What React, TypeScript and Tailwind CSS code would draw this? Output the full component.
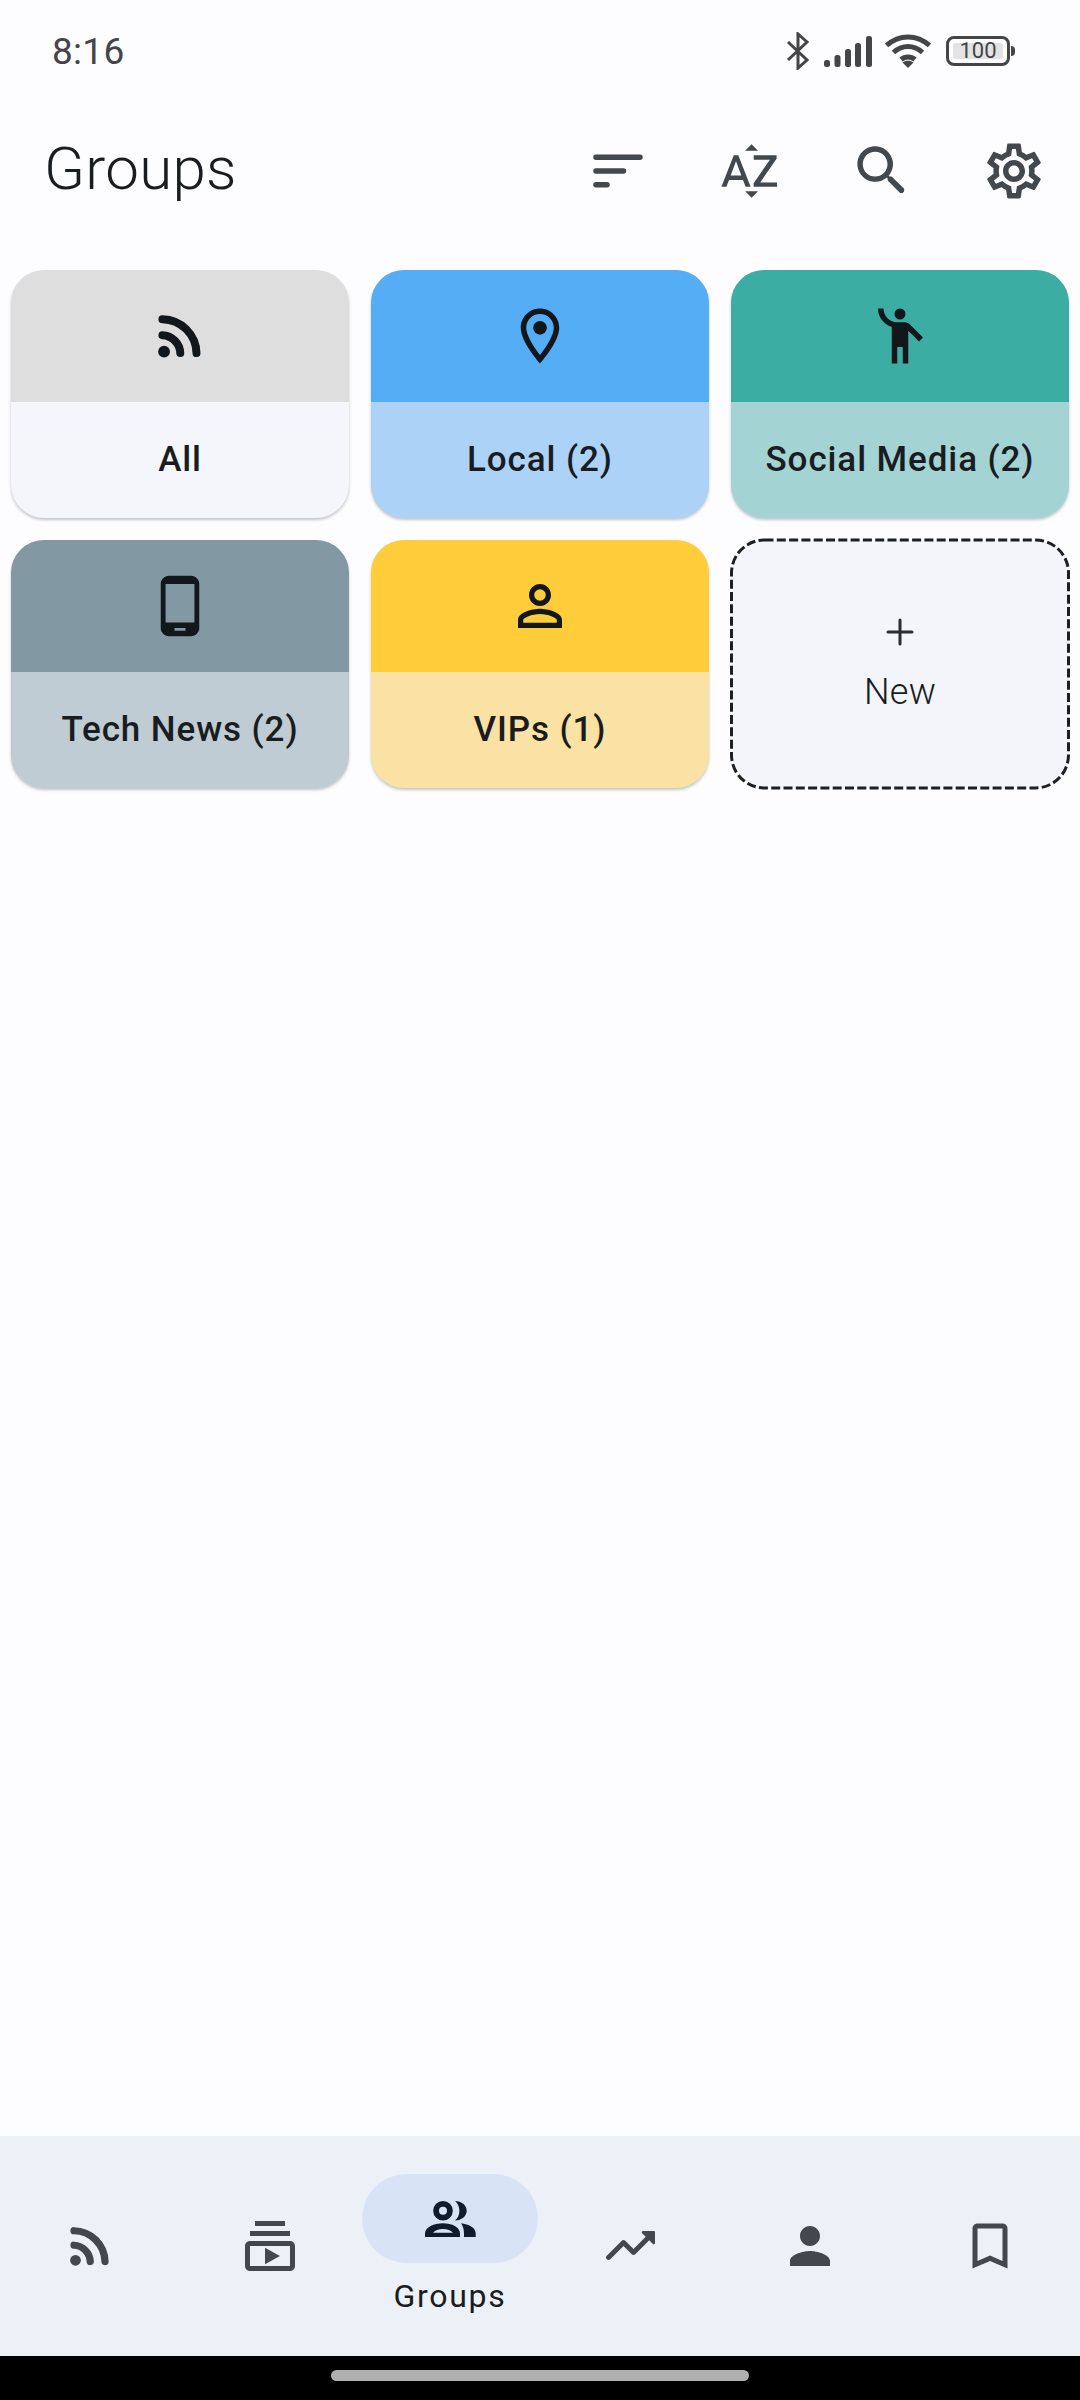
import type { ReactNode } from "react";
import {
  MdBookmarkBorder,
  MdEmojiPeople,
  MdOutlineLocationOn,
  MdOutlineSettings,
  MdOutlineSubscriptions,
  MdPerson,
  MdPersonOutline,
  MdPhoneAndroid,
  MdSortByAlpha,
} from "react-icons/md";

const ROBOTO = "font-['Roboto',sans-serif]";

function RssIcon({ size }: { size: number }) {
  return (
    <svg width={size} height={size} viewBox="0 0 24 24" fill="none" stroke="currentColor" strokeWidth="2.9" strokeLinecap="round">
      <circle cx="6.2" cy="17.7" r="2.15" fill="currentColor" stroke="none" />
      <path d="M5.6 5.9A12.6 12.6 0 0 1 18 18.2" />
      <path d="M5.6 11.7A6.8 6.8 0 0 1 12.1 18.2" />
    </svg>
  );
}

function SortIcon() {
  return (
    <svg width="66" height="66" viewBox="0 0 24 24" fill="none" stroke="currentColor" strokeWidth="2" strokeLinecap="round">
      <path d="M4 7h16M4 12h10M4 17h4" />
    </svg>
  );
}

function SearchIcon() {
  return (
    <svg width="66" height="66" viewBox="0 0 24 24" fill="currentColor">
      <path d="M15.5 14h-.79l-.28-.27c1.2-1.4 1.82-3.31 1.48-5.34-.47-2.78-2.79-5-5.59-5.34-4.2-.51-7.73 3.02-7.22 7.22.34 2.8 2.56 5.12 5.34 5.59 2.03.34 3.94-.28 5.34-1.48l.27.28v.79l4.25 4.25c.41.41 1.08.41 1.49 0 .41-.41.41-1.08 0-1.49L15.5 14zm-6 0C7.01 14 5 11.99 5 9.5S7.01 5 9.5 5 14 7.01 14 9.5 11.99 14 9.5 14z" />
    </svg>
  );
}

function TrendingIcon() {
  return (
    <svg width="60" height="60" viewBox="0 0 24 24" fill="currentColor">
      <path d="M16.85 6.85l1.44 1.44-4.88 4.88-3.29-3.29c-.39-.39-1.02-.39-1.41 0l-6 6.01c-.39.39-.39 1.02 0 1.41.39.39 1.02.39 1.41 0L9.41 12l3.29 3.29c.39.39 1.02.39 1.41 0l5.59-5.58 1.44 1.44c.31.31.85.09.85-.35V6.5c.01-.28-.21-.5-.49-.5h-4.29c-.45 0-.67.54-.36.85z" />
    </svg>
  );
}

function GroupsIcon() {
  return (
    <svg width="60" height="60" viewBox="0 0 60 60" fill="currentColor" fillRule="evenodd">
      {/* front head, back head crescent, front body, back body */}
      <path d="M23 12a9.800 9.800 0 1 1 0 19.600a9.800 9.800 0 0 1 0-19.600zm0 5.800a4 4 0 1 0 0 8a4 4 0 0 0 0-8z" />
      <path d="M35 12c6.500 0 11.700 4.400 11.700 9.800s-5.200 9.800-11.700 9.800c3-2.600 4.400-5.900 4.400-9.800s-1.400-7.200-4.400-9.800z" />
      <path d="M5 48v-3.500c0-6.500 9-10.300 18-10.300s17 3.800 17 10.300V48zM13 43.800h20c-1.800-2.400-5.800-3.800-10-3.800s-8.200 1.400-10 3.800z" />
      <path d="M41 34.300c7.500 1 14.700 4 14.700 10.200V48H44v-3.500c0-3.800-1-7.200-3-10.200z" />
    </svg>
  );
}

function StatusIcons() {
  return (
    <div className="flex items-center text-[#444548]">
      <svg width="24" height="38" viewBox="0 0 24 38" fill="none" stroke="currentColor" strokeWidth="3">
        <path d="M2 10l19 18-9 8V2l9 8L2 28" />
      </svg>
      <svg className="ml-[14px]" width="48" height="31" viewBox="0 0 48 31" fill="currentColor">
        <rect x="0" y="24" width="6" height="7" rx="2.500" />
        <rect x="10.500" y="19" width="6" height="12" rx="2.500" />
        <rect x="21" y="13" width="6" height="18" rx="2.500" />
        <rect x="31" y="7" width="6" height="24" rx="2.500" />
        <rect x="42" y="0" width="6" height="31" rx="2.500" />
      </svg>
      <svg className="ml-[13px]" width="46" height="34" viewBox="0 0 46 34" fill="none" stroke="currentColor" strokeWidth="5">
        <path d="M1.500 11.500C14 0 32 0 44.500 11.500" />
        <path d="M8.500 18.500C17 10.500 29 10.500 37.500 18.500" />
        <path d="M16 25.500C20 22 26 22 30 25.500" />
        <path d="M23 34l-5.500-5.500c3-2.500 8-2.500 11 0z" fill="currentColor" stroke="none" />
      </svg>
      <div className="relative ml-[15px] flex h-[30px] w-[64px] items-center justify-center rounded-[8px] border-[3px] border-[#444548]">
        <span className={`${ROBOTO} flex h-[16px] w-[50px] items-center justify-center rounded-[3px] bg-[#e3e3e4] text-[22px] leading-none`}>
          100
        </span>
      </div>
      <span className="ml-px h-[10px] w-[4px] rounded-r-full bg-[#444548]" />
    </div>
  );
}

function GroupCard({ icon, label, head, body }: { icon: ReactNode; label: string; head: string; body: string }) {
  return (
    <div className={`flex h-[248px] flex-col overflow-hidden rounded-[33px] shadow-[0_2px_3px_rgba(0,0,0,0.22)] ${body}`}>
      <div className={`flex h-[132px] items-center justify-center text-[#11171b] ${head}`}>{icon}</div>
      <div className={`${ROBOTO} flex flex-1 items-center justify-center text-[35px] font-medium tracking-[0.9px] text-[#191c20]`}>
        {label}
      </div>
    </div>
  );
}

function NewCard() {
  return (
    <div className="relative flex h-[248px] flex-col items-center rounded-[33px] bg-[#f3f5fa] pt-[77px]">
      <svg className="absolute inset-0 overflow-visible" width="338" height="248" fill="none" stroke="#1d1f23" strokeWidth="3">
        <rect x="0.500" y="0" width="337" height="248" rx="33" strokeDasharray="9 3.300" />
      </svg>
      <svg width="30" height="30" viewBox="0 0 30 30" stroke="#2a2d31" strokeWidth="3" strokeLinecap="round">
        <path d="M15 3v24M3 15h24" />
      </svg>
      <span className={`${ROBOTO} mt-[22px] text-[36px] font-light leading-[46px] tracking-[0.3px] text-[#191c20]`}>New</span>
    </div>
  );
}

function NavItem({ children }: { children: ReactNode }) {
  return <div className="flex flex-1 items-center justify-center text-[#43474e]">{children}</div>;
}

export default function App() {
  return (
    <div className="flex h-[2400px] w-[1080px] flex-col overflow-hidden bg-[#fdfdff]">
      {/* status bar */}
      <div className="flex h-[102px] items-center justify-between pl-[52px] pr-[65px]">
        <span className={`${ROBOTO} pt-[2px] text-[37px] tracking-[0.3px] text-[#444548]`}>8:16</span>
        <StatusIcons />
      </div>

      {/* app bar */}
      <div className="flex h-[138px] items-center justify-between pl-[44px]">
        <h1 className={`${ROBOTO} pb-[4px] text-[60px] font-light tracking-[0.3px] text-[#191c20]`}>Groups</h1>
        <div className="flex text-[#43474e]">
          <button className="flex w-[132px] justify-center"><SortIcon /></button>
          <button className="flex w-[132px] justify-center"><MdSortByAlpha size={66} /></button>
          <button className="flex w-[132px] justify-center"><SearchIcon /></button>
          <button className="flex w-[132px] justify-center"><MdOutlineSettings size={66} /></button>
        </div>
      </div>

      {/* group grid */}
      <main className="grid flex-1 grid-cols-3 content-start gap-[22px] px-[11px] pt-[30px]">
        <GroupCard icon={<RssIcon size={66} />} label="All" head="bg-[#dededf]" body="bg-[#f4f6fb]" />
        <GroupCard icon={<MdOutlineLocationOn size={66} />} label="Local (2)" head="bg-[#55adf5]" body="bg-[#acd3f7]" />
        <GroupCard icon={<MdEmojiPeople size={66} />} label="Social Media (2)" head="bg-[#3cada2]" body="bg-[#a3d3d2]" />
        <GroupCard icon={<MdPhoneAndroid size={66} />} label="Tech News (2)" head="bg-[#8298a3]" body="bg-[#c0ccd3]" />
        <GroupCard icon={<MdPersonOutline size={66} />} label="VIPs (1)" head="bg-[#ffcc3a]" body="bg-[#f9e2a3]" />
        <NewCard />
      </main>

      {/* bottom nav */}
      <nav className="flex h-[220px] bg-[#ecf0f7]">
        <NavItem><RssIcon size={60} /></NavItem>
        <NavItem><MdOutlineSubscriptions size={60} /></NavItem>
        <div className="flex flex-1 flex-col items-center pt-[38px]">
          <div className="flex h-[89px] w-[176px] items-center justify-center rounded-full bg-[#d9e3f6] text-[#101c2b]">
            <GroupsIcon />
          </div>
          <span className={`${ROBOTO} mt-[13px] text-[32px] leading-[40px] tracking-[1.7px] text-[#191c20]`}>Groups</span>
        </div>
        <NavItem><TrendingIcon /></NavItem>
        <NavItem><MdPerson size={60} /></NavItem>
        <NavItem><MdBookmarkBorder size={60} /></NavItem>
      </nav>

      {/* gesture bar */}
      <div className="flex h-[44px] items-start justify-center bg-black pt-[14px]">
        <span className="h-[11px] w-[418px] rounded-full bg-[#b0b0b0]" />
      </div>
    </div>
  );
}
